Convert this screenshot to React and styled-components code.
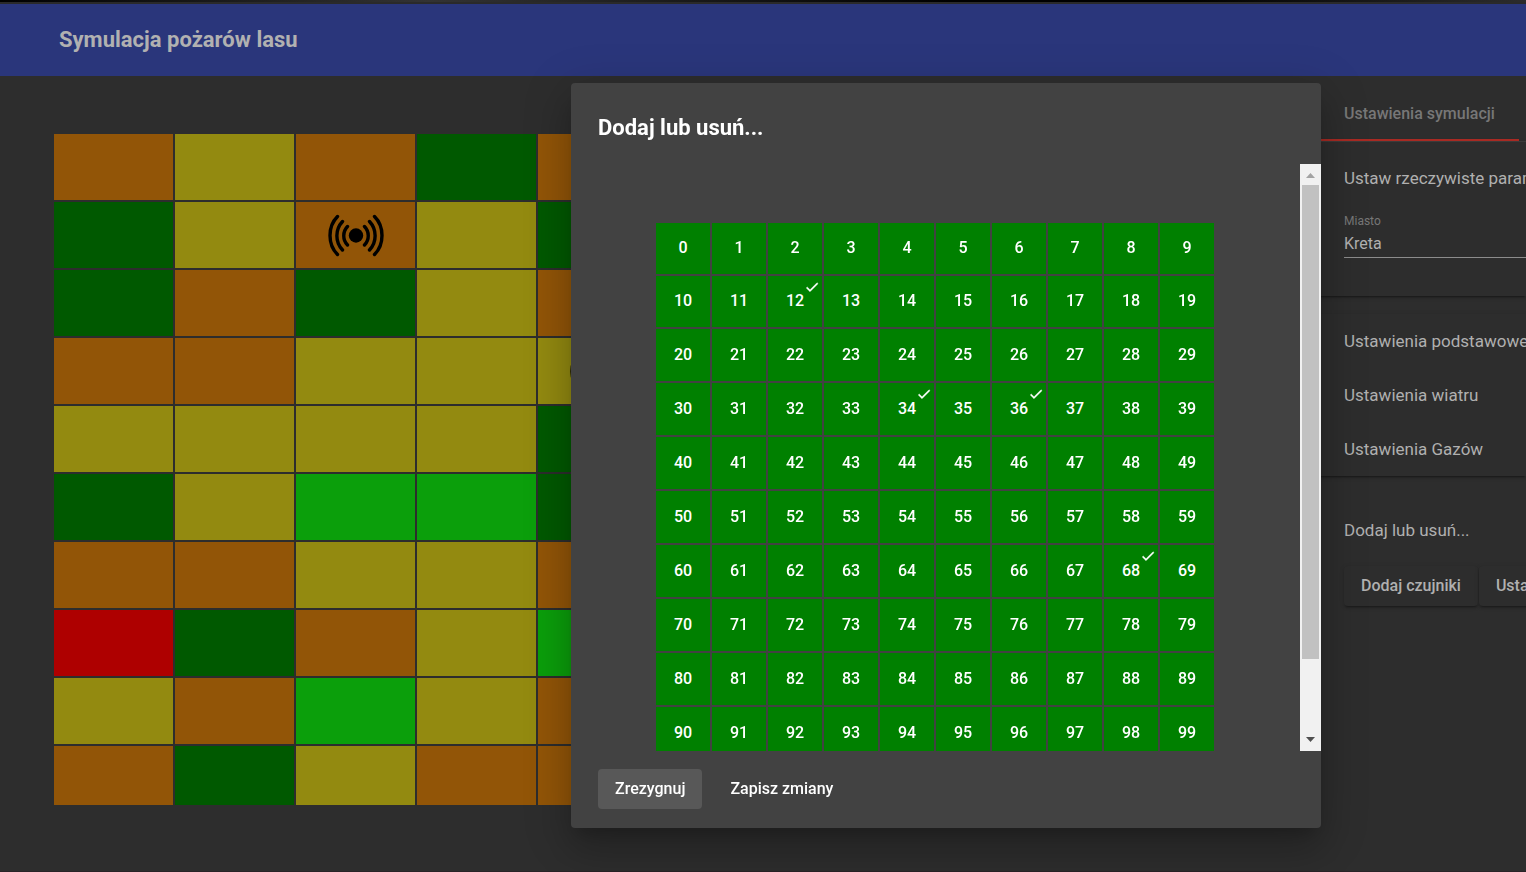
import React, { useState } from "react";
import styled, { createGlobalStyle } from "styled-components";

const Global = createGlobalStyle`
  *, *::before, *::after { box-sizing: border-box; }
  body {
    margin: 0;
    overflow: hidden;
    background: #2d2d2d;
    color: #b0b0b0;
    font-family: Roboto, "Liberation Sans", sans-serif;
    font-size: 17px;
  }
  button, input { font-family: inherit; }
  h1, h2, h3, p { margin: 0; font-weight: 400; }
`;

const Page = styled.div`
  display: flex;
  flex-direction: column;
  min-height: 100vh;
  border-bottom: 1px solid #292327;
`;

const TopEdge = styled.div`
  height: 4px;
  border-bottom: 2px solid #2a2a2a;
  background: linear-gradient(90deg, #000, #333 28%, #000 62%, #000 78%, #2c2c2c);
`;

const Header = styled.header`
  display: flex;
  align-items: center;
  height: 72px;
  padding: 0 59px;
  background: #2a367b;
`;

const Title = styled.h1`
  font-size: 22px;
  font-weight: 700;
  line-height: 36px;
  color: #b1b1b1;
`;

const Main = styled.main`
  display: grid;
  grid-template-columns: minmax(0, 1208fr) minmax(0, 209fr);
  gap: 55px;
  padding-left: 54px;
`;

const Board = styled.div`
  display: grid;
  grid-template-columns: repeat(10, 1fr);
  grid-template-rows: repeat(9, 66px) 59px;
  gap: 2px;
  margin-top: 58px;
`;

const tones = {
  o: "#925507",
  y: "#938a10",
  g: "#005900",
  l: "#0b9f0b",
  r: "#ae0000",
};

const Sector = styled.div`
  display: flex;
  align-items: center;
  justify-content: center;
  background: ${(p) => tones[p.$tone]};
`;

const Side = styled.aside`
  overflow: hidden;
  white-space: nowrap;
`;

const TabBar = styled.div`
  height: 66px;
  border-bottom: 1px solid #3d3d3d;
`;

const Tab = styled.button`
  display: block;
  width: 202px;
  height: 65px;
  padding: 12px 27px 0;
  border: 0;
  border-bottom: 2px solid #ab2b24;
  background: none;
  color: #777;
  font-size: 16px;
  font-weight: 500;
  text-align: left;
`;

const Card = styled.section`
  margin-bottom: 18px;
  background: #2d2d2d;
  box-shadow: 0 3px 1px -2px rgba(0, 0, 0, 0.2), 0 2px 2px rgba(0, 0, 0, 0.14), 0 1px 5px rgba(0, 0, 0, 0.12);
`;

const CityCard = styled(Card)`
  height: 154px;
  padding: 23px 0 0 27px;
`;

const SideText = styled.h2`
  font-size: 17px;
  line-height: 27px;
  color: #b0b0b0;
`;

const Field = styled.label`
  display: flex;
  flex-direction: column;
  margin-top: 21px;
  font-size: 12px;
  line-height: 16px;
  color: #777;
`;

const FieldInput = styled.input`
  width: 100%;
  height: 29px;
  padding: 0;
  border: 0;
  border-bottom: 1px solid #8c8c8c;
  outline: 0;
  background: none;
  color: #b0b0b0;
  font-size: 16px;
`;

const PanelButton = styled.button`
  display: block;
  width: 100%;
  height: 54px;
  padding: 0 27px;
  border: 0;
  background: none;
  color: #b0b0b0;
  font-size: 17px;
  text-align: left;
`;

const Actions = styled.section`
  padding: 23px 0 0 27px;
`;

const ActionRow = styled.div`
  display: flex;
  gap: 1px;
  margin-top: 22px;
  padding-bottom: 8px;
`;

const RaisedButton = styled.button`
  flex: none;
  height: 40px;
  padding: 0 17px 2px;
  border: 0;
  border-radius: 4px;
  background: #2d2d2d;
  color: #b0b0b0;
  font-size: 16px;
  font-weight: 500;
  box-shadow: 0 3px 1px -2px rgba(0, 0, 0, 0.2), 0 2px 2px rgba(0, 0, 0, 0.14), 0 1px 5px rgba(0, 0, 0, 0.12);
`;

const Overlay = styled.div`
  position: fixed;
  inset: 0;
  display: flex;
  justify-content: flex-end;
  align-items: flex-start;
  padding: 83px 205px 0 0;
`;

const Dialog = styled.div`
  width: 750px;
  padding: 28px 0 19px;
  border-radius: 4px;
  background: #424242;
  color: #fff;
  box-shadow: 0 11px 15px -7px rgba(0, 0, 0, 0.2), 0 24px 38px 3px rgba(0, 0, 0, 0.14), 0 9px 46px 8px rgba(0, 0, 0, 0.12);
`;

const DialogTitle = styled.h2`
  padding: 0 27px;
  font-size: 22px;
  font-weight: 700;
  line-height: 34px;
`;

const DialogBody = styled.div`
  display: flex;
  height: 587px;
  margin-top: 19px;
`;

const Picker = styled.div`
  flex: 1;
  overflow: hidden;
  padding: 59px 86px 0 85px;
`;

const PickerGrid = styled.div`
  display: grid;
  grid-template-columns: repeat(10, 1fr);
  grid-template-rows: 51px 51px repeat(8, 52px);
  gap: 2px;
`;

const Tile = styled.button`
  position: relative;
  padding: 0 0 2px;
  border: 0;
  background: #008000;
  color: #fff;
  font-size: 16px;
  font-weight: 500;
`;

const CheckBadge = styled.span`
  position: absolute;
  top: 3px;
  right: 2px;
  display: flex;
`;

const ScrollTrack = styled.div`
  display: flex;
  flex-direction: column;
  align-items: center;
  width: 21px;
  background: #f1f1f1;
`;

const ScrollArrow = styled.div`
  display: flex;
  align-items: center;
  justify-content: center;
  height: 21px;
  padding-top: ${(p) => (p.$active ? 0 : 2)}px;
  padding-bottom: ${(p) => (p.$active ? 2 : 0)}px;
  color: ${(p) => (p.$active ? "#505050" : "#a3a3a3")};
`;

const ScrollThumb = styled.div`
  width: 17px;
  height: 474px;
  margin-bottom: auto;
  background: #c1c1c1;
`;

const DialogActions = styled.div`
  display: flex;
  gap: 11px;
  padding: 18px 27px 0;
`;

const DialogButton = styled.button`
  height: 40px;
  padding: 0 17px 2px;
  border: 0;
  border-radius: 4px;
  background: ${(p) => (p.$focused ? "#585858" : "transparent")};
  color: #fff;
  font-size: 16px;
  font-weight: 500;
`;

const sectors = [
  "oyogoyoygo",
  "gyoygoyygo",
  "gogyoyogyo",
  "ooyyyoygyo",
  "yyyygyoyog",
  "gyllgyoygy",
  "ooyyoyygoy",
  "rgoylyogyo",
  "yolyoygoyy",
  "ogyooygyoy",
];
const sensors = [12, 34, 36, 68];

const SensorIcon = () => (
  <svg width="58" height="44" viewBox="0 0 58 44" fill="none" stroke="#000" strokeWidth="3.4" strokeLinecap="round" aria-hidden="true">
    <circle cx="29" cy="22.5" r="7.2" fill="#000" stroke="none" />
    <path d="M20.5 13.500C15.500 18.500 15.500 27 20.500 32M15.500 8.500C8 16.500 8 29 15.500 37M10.500 3.500C.5 13.500 .5 31.500 10.500 41.500" />
    <path d="M37.500 13.500C42.500 18.500 42.500 27 37.500 32M42.500 8.500C50 16.500 50 29 42.500 37M47.500 3.500C57.500 13.500 57.500 31.500 47.500 41.500" />
  </svg>
);

export default function App() {
  const [selected, setSelected] = useState(sensors);
  const toggle = (n) =>
    setSelected((s) => (s.includes(n) ? s.filter((v) => v !== n) : [...s, n]));

  return (
    <>
      <Global />
      <Page>
        <TopEdge />
        <Header>
          <Title>Symulacja pożarów lasu</Title>
        </Header>
        <Main>
          <Board>
            {sectors.join("").split("").map((tone, i) => (
              <Sector key={i} $tone={tone}>
                {sensors.includes(i) && <SensorIcon />}
              </Sector>
            ))}
          </Board>
          <Side>
            <TabBar>
              <Tab>Ustawienia symulacji</Tab>
            </TabBar>
            <CityCard>
              <SideText>Ustaw rzeczywiste parametry</SideText>
              <Field>
                Miasto
                <FieldInput defaultValue="Kreta" />
              </Field>
            </CityCard>
            <Card>
              <PanelButton>Ustawienia podstawowe</PanelButton>
              <PanelButton>Ustawienia wiatru</PanelButton>
              <PanelButton>Ustawienia Gazów</PanelButton>
            </Card>
            <Actions>
              <SideText>Dodaj lub usuń...</SideText>
              <ActionRow>
                <RaisedButton>Dodaj czujniki</RaisedButton>
                <RaisedButton>Ustaw</RaisedButton>
              </ActionRow>
            </Actions>
          </Side>
        </Main>
      </Page>
      <Overlay>
        <Dialog role="dialog" aria-labelledby="dialog-title">
          <DialogTitle id="dialog-title">Dodaj lub usuń...</DialogTitle>
          <DialogBody>
            <Picker>
              <PickerGrid>
                {Array.from({ length: 100 }, (_, n) => (
                  <Tile key={n} aria-pressed={selected.includes(n)} onClick={() => toggle(n)}>
                    {n}
                    {selected.includes(n) && (
                      <CheckBadge>
                        <svg width="16" height="16" viewBox="0 0 24 24" fill="#fff" stroke="#fff" strokeWidth="0.6" aria-hidden="true">
                          <path d="M9 16.170 4.830 12l-1.420 1.410L9 19 21 7l-1.410-1.410z" />
                        </svg>
                      </CheckBadge>
                    )}
                  </Tile>
                ))}
              </PickerGrid>
            </Picker>
            <ScrollTrack aria-hidden="true">
              <ScrollArrow>
                <svg width="9" height="5" viewBox="0 0 9 5" fill="currentColor"><path d="M0 5 4.500 0 9 5z" /></svg>
              </ScrollArrow>
              <ScrollThumb />
              <ScrollArrow $active>
                <svg width="9" height="5" viewBox="0 0 9 5" fill="currentColor"><path d="M0 0 4.500 5 9 0z" /></svg>
              </ScrollArrow>
            </ScrollTrack>
          </DialogBody>
          <DialogActions>
            <DialogButton $focused>Zrezygnuj</DialogButton>
            <DialogButton>Zapisz zmiany</DialogButton>
          </DialogActions>
        </Dialog>
      </Overlay>
    </>
  );
}
